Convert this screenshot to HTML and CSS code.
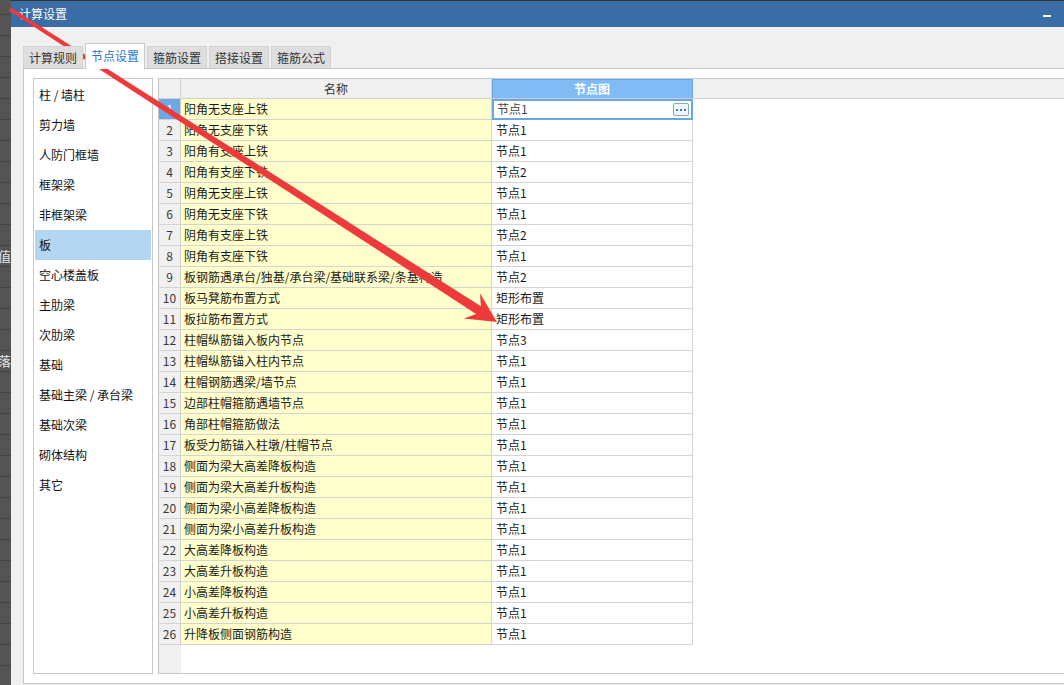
FILE: index.html
```html
<!DOCTYPE html>
<html lang="zh-CN">
<head>
<meta charset="utf-8">
<title>计算设置</title>
<link rel="stylesheet" href="styles.css">
</head>
<body>
<div class="desk">
  <div class="strip">
    <div class="strip-cell"><span>值</span></div>
    <div class="strip-cell strip-cell-2"><span>落</span></div>
  </div>
  <div class="dialog">
    <div class="titlebar">
      <span class="title">计算设置</span>
      <span class="minimize"></span>
    </div>
    <div class="dbody">
      <div class="tabs">
        <div class="tab">计算规则</div>
        <div class="tab active">节点设置</div>
        <div class="tab">箍筋设置</div>
        <div class="tab">搭接设置</div>
        <div class="tab">箍筋公式</div>
      </div>
      <div class="panel">
        <ul class="cats">
          <li>柱 / 墙柱</li>
          <li>剪力墙</li>
          <li>人防门框墙</li>
          <li>框架梁</li>
          <li>非框架梁</li>
          <li class="sel">板</li>
          <li>空心楼盖板</li>
          <li>主肋梁</li>
          <li>次肋梁</li>
          <li>基础</li>
          <li>基础主梁 / 承台梁</li>
          <li>基础次梁</li>
          <li>砌体结构</li>
          <li>其它</li>
        </ul>
        <div class="grid">
          <div class="ghead">
            <div class="c-num"></div>
            <div class="c-name">名称</div>
            <div class="c-node hl">节点图</div>
            <div class="c-fill"></div>
          </div>
          <div class="grow cur"><div class="c-num">1</div><div class="c-name">阳角无支座上铁</div><div class="c-node"><span>节点1</span><span class="dots"><i></i><i></i><i></i></span></div></div>
          <div class="grow"><div class="c-num">2</div><div class="c-name">阳角无支座下铁</div><div class="c-node">节点1</div></div>
          <div class="grow"><div class="c-num">3</div><div class="c-name">阳角有支座上铁</div><div class="c-node">节点1</div></div>
          <div class="grow"><div class="c-num">4</div><div class="c-name">阳角有支座下铁</div><div class="c-node">节点2</div></div>
          <div class="grow"><div class="c-num">5</div><div class="c-name">阴角无支座上铁</div><div class="c-node">节点1</div></div>
          <div class="grow"><div class="c-num">6</div><div class="c-name">阴角无支座下铁</div><div class="c-node">节点1</div></div>
          <div class="grow"><div class="c-num">7</div><div class="c-name">阴角有支座上铁</div><div class="c-node">节点2</div></div>
          <div class="grow"><div class="c-num">8</div><div class="c-name">阴角有支座下铁</div><div class="c-node">节点1</div></div>
          <div class="grow"><div class="c-num">9</div><div class="c-name">板钢筋遇承台/独基/承台梁/基础联系梁/条基构造</div><div class="c-node">节点2</div></div>
          <div class="grow"><div class="c-num">10</div><div class="c-name">板马凳筋布置方式</div><div class="c-node">矩形布置</div></div>
          <div class="grow"><div class="c-num">11</div><div class="c-name">板拉筋布置方式</div><div class="c-node">矩形布置</div></div>
          <div class="grow"><div class="c-num">12</div><div class="c-name">柱帽纵筋锚入板内节点</div><div class="c-node">节点3</div></div>
          <div class="grow"><div class="c-num">13</div><div class="c-name">柱帽纵筋锚入柱内节点</div><div class="c-node">节点1</div></div>
          <div class="grow"><div class="c-num">14</div><div class="c-name">柱帽钢筋遇梁/墙节点</div><div class="c-node">节点1</div></div>
          <div class="grow"><div class="c-num">15</div><div class="c-name">边部柱帽箍筋遇墙节点</div><div class="c-node">节点1</div></div>
          <div class="grow"><div class="c-num">16</div><div class="c-name">角部柱帽箍筋做法</div><div class="c-node">节点1</div></div>
          <div class="grow"><div class="c-num">17</div><div class="c-name">板受力筋锚入柱墩/柱帽节点</div><div class="c-node">节点1</div></div>
          <div class="grow"><div class="c-num">18</div><div class="c-name">侧面为梁大高差降板构造</div><div class="c-node">节点1</div></div>
          <div class="grow"><div class="c-num">19</div><div class="c-name">侧面为梁大高差升板构造</div><div class="c-node">节点1</div></div>
          <div class="grow"><div class="c-num">20</div><div class="c-name">侧面为梁小高差降板构造</div><div class="c-node">节点1</div></div>
          <div class="grow"><div class="c-num">21</div><div class="c-name">侧面为梁小高差升板构造</div><div class="c-node">节点1</div></div>
          <div class="grow"><div class="c-num">22</div><div class="c-name">大高差降板构造</div><div class="c-node">节点1</div></div>
          <div class="grow"><div class="c-num">23</div><div class="c-name">大高差升板构造</div><div class="c-node">节点1</div></div>
          <div class="grow"><div class="c-num">24</div><div class="c-name">小高差降板构造</div><div class="c-node">节点1</div></div>
          <div class="grow"><div class="c-num">25</div><div class="c-name">小高差升板构造</div><div class="c-node">节点1</div></div>
          <div class="grow"><div class="c-num">26</div><div class="c-name">升降板侧面钢筋构造</div><div class="c-node">节点1</div></div>
          <div class="gempty"></div>
        </div>
      </div>
    </div>
  </div>
</div>
<svg class="arrow" width="1064" height="685" viewBox="0 0 1064 685">
  <polygon points="10.9,7.4 480.9,306.3 479.9,293.2 497,322 463.7,318.4 476.1,313.9 8.9,10.4" fill="#ee3a3a"/>
</svg>
</body>
</html>
```

FILE: styles.css
```css
* { box-sizing: border-box; }

html, body {
  margin: 0;
  padding: 0;
}

body {
  width: 1064px;
  height: 685px;
  overflow: hidden;
  background: #333333;
  font-family: "Noto Sans CJK SC", "Noto Sans", sans-serif;
  font-size: 12px;
  color: #1a1a1a;
  position: relative;
}

.desk {
  display: flex;
  height: 685px;
}

/* background window sliver on the left */
.strip {
  width: 11px;
  flex: none;
  background: repeating-linear-gradient(to bottom, #545454 0 20px, #444444 20px 21px);
  background-position: 0 -6px;
  padding-top: 246px;
  overflow: hidden;
}

.strip-cell {
  height: 20px;
  display: flex;
  justify-content: flex-end;
  align-items: center;
  color: #e4e4e4;
  font-size: 13px;
  white-space: nowrap;
  line-height: 20px;
}

.strip-cell-2 {
  margin-top: 85px;
}

.dialog {
  flex: 1;
  margin-top: 1px;
  display: flex;
  flex-direction: column;
  min-width: 0;
}

.titlebar {
  height: 26px;
  flex: none;
  background: #3a6ca5;
  display: flex;
  align-items: center;
  justify-content: space-between;
  padding: 0 13px 0 8px;
}

.title {
  color: #ffffff;
  font-size: 12px;
  line-height: 26px;
}

.minimize {
  width: 8px;
  height: 2px;
  background: #ffffff;
  margin-top: 4px;
}

.dbody {
  flex: 1;
  background: #f0f0f0;
  padding: 16px 0 0 12px;
  display: flex;
  flex-direction: column;
  min-height: 0;
}

.tabs {
  height: 25px;
  flex: none;
  display: flex;
  align-items: flex-end;
  gap: 2px;
  position: relative;
  z-index: 1;
}

.tab {
  height: 22px;
  padding: 0 5px;
  background: #dedede;
  border: 1px solid #d2d2d2;
  border-bottom: none;
  color: #333333;
  line-height: 21px;
  white-space: nowrap;
}

.tab.active {
  height: 26px;
  margin-bottom: -1px;
  background: #ffffff;
  border-color: #c8c8c8;
  color: #1f78d1;
  line-height: 24px;
}

.panel {
  flex: 1;
  min-height: 0;
  margin-bottom: 1px;
  background: #ffffff;
  border: 1px solid #c8c8c8;
  border-right: none;
  padding: 9px 0 9px 9px;
  display: flex;
  gap: 5px;
}

.cats {
  width: 120px;
  flex: none;
  margin: 0;
  padding: 1px;
  list-style: none;
  border: 1px solid #c8c8c8;
  background: #ffffff;
}

.cats li {
  height: 30px;
  line-height: 30px;
  padding-left: 4px;
  white-space: nowrap;
  color: #111111;
}

.cats li.sel {
  background: #b3d7f3;
}

.grid {
  flex: 1;
  min-width: 0;
  border: 1px solid #c8c8c8;
  border-right: none;
  background: #ffffff;
  display: flex;
  flex-direction: column;
  overflow: hidden;
}

.ghead,
.grow {
  display: flex;
  flex: none;
}

.ghead {
  height: 20px;
  background: #f0f0f0;
  border-bottom: 1px solid #d0d0d0;
  color: #333333;
  line-height: 19px;
}

.grow {
  height: 21px;
  line-height: 20px;
}

.c-num {
  width: 22px;
  flex: none;
  text-align: center;
  background: #f0f0f0;
  border-right: 1px solid #d0d0d0;
  color: #3a3a3a;
}

.c-name {
  width: 311px;
  flex: none;
  border-right: 1px solid #d4d4d4;
  white-space: nowrap;
  overflow: hidden;
}

.c-node {
  width: 201px;
  flex: none;
  border-right: 1px solid #d4d4d4;
  white-space: nowrap;
}

.c-fill {
  flex: 1;
}

.ghead .c-name {
  text-align: center;
}

.ghead .c-node.hl {
  background: #80bbf6;
  color: #ffffff;
  font-weight: bold;
  text-align: center;
  border-right-color: #68a6e6;
  box-shadow: inset 0 1px 0 #68a6e6, inset 1px 0 0 #68a6e6;
}

.ghead .c-num {
  background: #f0f0f0;
}

.grow .c-num,
.grow .c-name,
.grow .c-node {
  border-bottom: 1px solid #d4d4d4;
}

.grow .c-name {
  background: #ffffcc;
  padding-left: 3px;
}

.grow .c-node {
  padding-left: 4px;
}

.grow.cur .c-num {
  background: #6ea8e4;
  color: #ffffff;
}

.grow.cur .c-node {
  outline: 2px solid #6aa6e5;
  outline-offset: -2px;
  padding: 0 3px 0 5px;
  display: flex;
  align-items: center;
  justify-content: space-between;
  color: #444444;
}

.dots {
  width: 16px;
  height: 13px;
  border: 1px solid #7eaad8;
  border-radius: 2px;
  background: #f3f7fc;
  display: flex;
  align-items: center;
  justify-content: center;
  gap: 2px;
  padding-top: 2px;
}

.dots i {
  width: 2px;
  height: 2px;
  background: #3b7bc6;
}

.gempty {
  flex: 1;
  background: linear-gradient(to right, #f0f0f0 0 22px, #ffffff 22px);
}

.arrow {
  position: absolute;
  left: 0;
  top: 0;
  pointer-events: none;
}
```
